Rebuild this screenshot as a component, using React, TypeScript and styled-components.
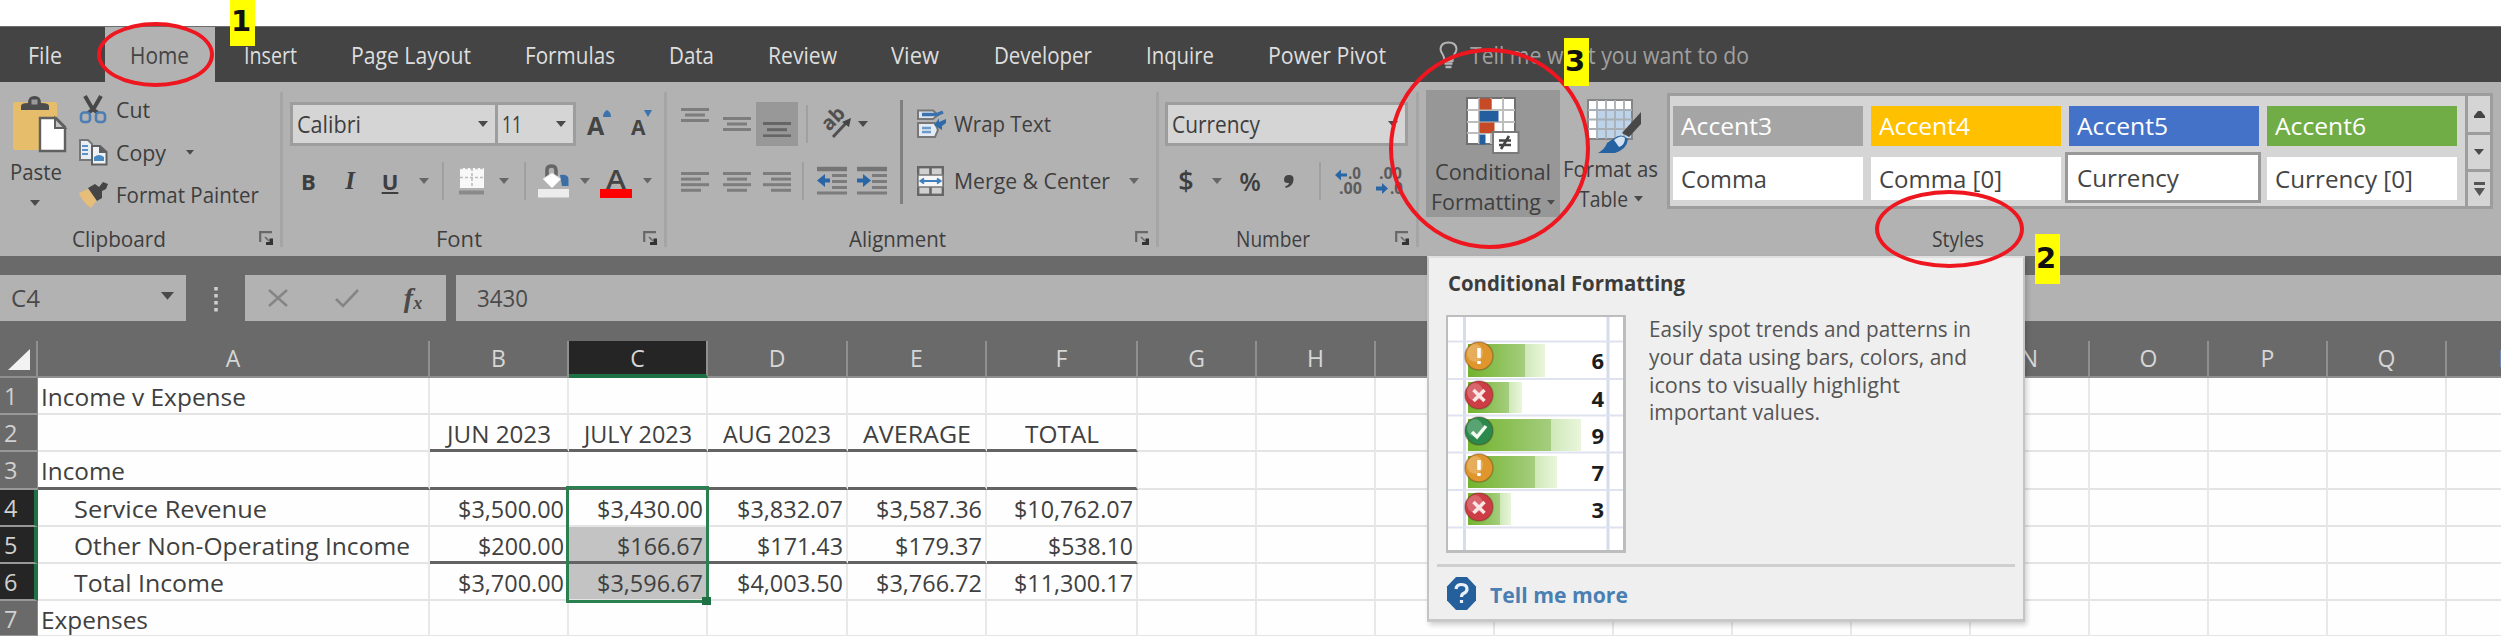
import React, { useLayoutEffect, useRef, useState } from "react";
import styled, { createGlobalStyle } from "styled-components";

const GlobalStyle = createGlobalStyle`
  * { box-sizing: border-box; }
  body { margin: 0; background: #fff; overflow: hidden; font-family: "Open Sans", "Noto Sans", sans-serif; }
`;

/* ---------- text stretched to a known advance width ---------- */
const FitBox = styled.span<{ $w: number; $ml: number }>`
  display: block;
  flex: none;
  width: ${(p) => p.$w}px;
  margin-left: ${(p) => p.$ml}px;
  white-space: nowrap;
`;
const FitInner = styled.span`
  display: inline-block;
  transform-origin: 0 50%;
`;
function Fit({ w, ml = 0, children }: { w: number; ml?: number; children: React.ReactNode }) {
  const ref = useRef<HTMLSpanElement>(null);
  const [k, setK] = useState(1);
  useLayoutEffect(() => {
    if (ref.current && ref.current.offsetWidth) setK(w / ref.current.getBoundingClientRect().width);
  }, []);
  return (
    <FitBox $w={w} $ml={ml}>
      <FitInner ref={ref} style={{ transform: `scaleX(${k})` }}>{children}</FitInner>
    </FitBox>
  );
}

/* ---------- shell ---------- */
const Page = styled.div`
  position: relative;
  width: 2509px;
  height: 640px;
  padding-top: 26px;
  overflow: hidden;
  background: #fff;
`;
const Window = styled.div`
  width: 2501px;
  height: 610px;
  overflow: hidden;
  background: #6a6a6a;
`;

/* ---------- tabs ---------- */
const TabBar = styled.nav`
  display: flex;
  height: 56px;
  background: #444;
  border-top: 1px solid #6d6d6d;
  font-size: 24px;
  font-weight: 500;
  line-height: 56px;
  color: #dedede;
`;
const Tab = styled.div<{ $active?: boolean; $pl?: number; $pr?: number }>`
  display: flex;
  flex: none;
  padding: 0 ${(p) => p.$pr ?? 27.5}px 0 ${(p) => p.$pl ?? 27.5}px;
  background: ${(p) => (p.$active ? "#b2b2b2" : "transparent")};
  color: ${(p) => (p.$active ? "#444" : "#dedede")};
`;
const TellMe = styled.div`
  display: flex;
  align-items: center;
  gap: 12px;
  margin-left: 26px;
  color: #a0a0a0;
  font-size: 24px;
`;

/* ---------- ribbon ---------- */
const Ribbon = styled.section`
  display: flex;
  height: 174px;
  padding-top: 10px;
  background: #b2b2b2;
  color: #3e3e3e;
  font-size: 22.5px;
  font-weight: 500;
`;
const Group = styled.div<{ $w: number; $last?: boolean }>`
  display: flex;
  flex: none;
  flex-direction: column;
  width: ${(p) => p.$w}px;
  height: 155px;
  border-right: ${(p) => (p.$last ? "none" : "3px solid #a5a5a5")};
`;
const Body = styled.div`
  display: flex;
  flex: none;
  height: 137px;
`;
const Footer = styled.div`
  display: flex;
  align-items: center;
  justify-content: space-between;
  height: 18px;
  padding-right: 6px;
  font-size: 22px;
  line-height: 18px;
`;
const Rows = styled.div<{ $ml?: number }>`
  display: flex;
  flex-direction: column;
  gap: 16px;
  padding-top: 10px;
  margin-left: ${(p) => p.$ml ?? 0}px;
`;
const ToolRow = styled.div<{ $h: number }>`
  display: flex;
  align-items: center;
  height: ${(p) => p.$h}px;
  line-height: ${(p) => p.$h}px;
`;
const Slot = styled.div<{ $ml?: number; $mt?: number }>`
  display: flex;
  flex: none;
  margin-left: ${(p) => p.$ml ?? 0}px;
  margin-top: ${(p) => p.$mt ?? 0}px;
  svg { display: block; overflow: visible; }
`;
const Rule = styled.div<{ $ml: number; $h?: number; $dark?: boolean }>`
  flex: none;
  width: ${(p) => (p.$dark ? 3 : 2)}px;
  height: ${(p) => p.$h ?? 38}px;
  margin-left: ${(p) => p.$ml}px;
  background: ${(p) => (p.$dark ? "#808080" : "#a0a0a0")};
`;
const Combo = styled.div<{ $w: number; $joined?: boolean }>`
  display: flex;
  flex: none;
  align-items: center;
  justify-content: space-between;
  width: ${(p) => p.$w}px;
  height: 44px;
  padding: 0 7px 0 4px;
  border: 3px solid #9d9d9d;
  border-left-width: ${(p) => (p.$joined ? 0 : 3)}px;
  background: #d5d5d5;
  font-size: 23px;
  line-height: 40px;
`;
const PasteButton = styled.div`
  display: flex;
  flex-direction: column;
  align-items: center;
  width: 72px;
  padding-top: 4px;
  line-height: 38px;
`;
const ClipList = styled.div`
  display: flex;
  flex-direction: column;
  margin-top: -3px;
  margin-left: 7px;
`;
const ClipItem = styled.div`
  display: flex;
  align-items: center;
  height: 42.5px;
  line-height: 42.5px;
`;
const IconCell = styled.div`
  display: flex;
  width: 37px;
  svg { display: block; overflow: visible; }
`;
const Pressed = styled.div`
  display: flex;
  flex: none;
  width: 42px;
  height: 44px;
  margin-left: 5px;
  padding: 20px 0 0 7px;
  background: #989898;
`;
const BigButton = styled.div<{ $w: number; $on?: boolean }>`
  display: flex;
  flex: none;
  flex-direction: column;
  align-items: center;
  width: ${(p) => p.$w}px;
  height: 127px;
  margin-top: -2px;
  padding-top: 7px;
  background: ${(p) => (p.$on ? "#979797" : "transparent")};
  line-height: 30px;
  svg { display: block; overflow: visible; }
`;
const ButtonText = styled.div<{ $mt?: number }>`
  display: flex;
  align-items: center;
  gap: 6px;
  margin-top: ${(p) => p.$mt ?? 0}px;
`;
const Letter = styled.span<{ $ml: number; $w: number; $italic?: boolean; $size?: number; $light?: boolean }>`
  flex: none;
  width: ${(p) => p.$w}px;
  margin-left: ${(p) => p.$ml}px;
  font-family: ${(p) => (p.$italic ? '"Liberation Serif", serif' : '"Open Sans", sans-serif')};
  font-size: ${(p) => p.$size ?? 22}px;
  font-style: ${(p) => (p.$italic ? "italic" : "normal")};
  font-weight: ${(p) => (p.$light ? 600 : 700)};
  text-align: center;
`;

/* ---------- style gallery ---------- */
const Gallery = styled.div`
  display: flex;
  flex: none;
  width: 826px;
  height: 116px;
  margin: 1px 0 0 6px;
  border: 3px solid #9d9d9d;
  background: #d5d5d5;
`;
const Swatches = styled.div`
  display: grid;
  grid-template-columns: 198px 198px 198px 190px;
  grid-template-rows: 51px 53px;
  flex: none;
  width: 795px;
  padding: 5px 0 0 3px;
`;
const Swatch = styled.div<{ $bg: string; $sel?: boolean; $text?: boolean }>`
  display: flex;
  align-items: center;
  width: ${(p) => (p.$sel ? 196 : 190)}px;
  height: ${(p) => (p.$text ? (p.$sel ? 51 : 43) : 40)}px;
  margin: ${(p) => (p.$text ? (p.$sel ? "0 0 0 -4px" : "5px 0 0") : "5px 0 0")};
  padding-left: ${(p) => (p.$sel ? 9 : 8)}px;
  border: ${(p) => (p.$sel ? "3px solid #999" : "none")};
  background: ${(p) => p.$bg};
  color: ${(p) => (p.$text ? "#444" : "#fff")};
  font-size: 24px;
  line-height: 38px;
`;
const Scroller = styled.div`
  display: flex;
  flex: 1;
  flex-direction: column;
  border-left: 3px solid #9d9d9d;
`;
const ScrollBtn = styled.div<{ $h: number; $last?: boolean }>`
  display: flex;
  align-items: center;
  justify-content: center;
  height: ${(p) => p.$h}px;
  border-bottom: ${(p) => (p.$last ? "none" : "3px solid #9d9d9d")};
`;

/* ---------- formula bar ---------- */
const FormulaBar = styled.section`
  display: flex;
  height: 85px;
  padding-top: 19px;
  color: #4a4a4a;
  font-size: 23px;
  line-height: 48px;
`;
const Field = styled.div<{ $w: number; $ml?: number; $pl?: number }>`
  display: flex;
  flex: none;
  align-items: center;
  width: ${(p) => p.$w}px;
  height: 46px;
  margin-left: ${(p) => p.$ml ?? 0}px;
  padding-left: ${(p) => p.$pl ?? 0}px;
  background: #b2b2b2;
`;
const Sub = styled.sub`
  font-size: 18px;
  line-height: 0;
  vertical-align: -2px;
`;

/* ---------- sheet ---------- */
const Sheet = styled.div`
  position: relative;
  display: grid;
  grid-template-columns: 38px 392px 139px 139px 140px 139px 151px repeat(12, 119px);
  grid-template-rows: 37px 37px 37px 38px 37px 37px 37px 36px;
  width: 2566px;
  background: #fefefe;
`;
const ColHead = styled.div<{ $on?: boolean }>`
  border-right: 2px solid #909090;
  border-bottom: ${(p) => (p.$on ? "4px solid #1e7145" : "2px solid #8f8f8f")};
  background: ${(p) => (p.$on ? "#252525" : "#6a6a6a")};
  color: #d6d6d6;
  font-size: 23px;
  font-weight: 500;
  line-height: 35px;
  text-align: center;
`;
const RowHead = styled.div<{ $on?: boolean }>`
  padding-left: 4px;
  border-right: ${(p) => (p.$on ? "4px solid #1e7145" : "1px solid #8a8a8a")};
  border-bottom: 2px solid #989898;
  background: ${(p) => (p.$on ? "#252525" : "#6a6a6a")};
  color: #d0d0d0;
  font-size: 23.5px;
  line-height: 37px;
`;
const Cell = styled.div<{ $rule?: boolean; $fill?: boolean; $align: string; $pad: number }>`
  display: flex;
  justify-content: ${(p) => p.$align};
  padding: 0 ${(p) => (p.$align === "flex-end" ? p.$pad : 0)}px 0 ${(p) => (p.$align === "flex-start" ? p.$pad : 0)}px;
  border-right: 2px solid ${(p) => (p.$fill ? "#c3c3c3" : "#e8e8e8")};
  border-bottom: ${(p) => (p.$rule ? "3px solid #636363" : "2px solid #e4e4e4")};
  background: ${(p) => (p.$fill ? "#c3c3c3" : "transparent")};
  color: #404040;
  font-size: 23.5px;
  font-weight: 500;
  line-height: 38px;
`;
const Selection = styled.div`
  position: absolute;
  left: 566px;
  top: 145px;
  width: 143px;
  height: 117px;
  border: 3px solid #2b8050;
`;
const FillHandle = styled.div`
  position: absolute;
  right: -5px;
  bottom: -5px;
  width: 9px;
  height: 8px;
  background: #1e7145;
`;

/* ---------- tooltip and annotations ---------- */
const Tip = styled.aside`
  position: absolute;
  left: 1427px;
  top: 256px;
  width: 598px;
  height: 366px;
  padding: 13px 8px 0;
  border: 2px solid #c4c4c4;
  border-top-color: #e0e0e0;
  border-bottom: 3px solid #c8c8c8;
  background: #efefef;
  box-shadow: 2px 3px 5px rgba(0, 0, 0, 0.18);
`;
const TipTitle = styled.div`
  padding-left: 11px;
  color: #3c3c3c;
  font-size: 22px;
  font-weight: 700;
  line-height: 22px;
`;
const TipMain = styled.div`
  display: flex;
  margin-top: 22px;
  padding-left: 9px;
`;
const Thumb = styled.div`
  flex: none;
  width: 180px;
  height: 238px;
  border: 2px solid #bdbdbd;
  border-right-width: 3px;
  border-bottom-width: 3px;
  background: #fff;
  svg { display: block; }
`;
const TipText = styled.div`
  margin-left: 23px;
  color: #555;
  font-size: 22.5px;
  font-weight: 500;
  line-height: 27.8px;
`;
const TipFoot = styled.div`
  display: flex;
  align-items: center;
  height: 52px;
  margin-top: 11px;
  padding: 4px 0 0 9px;
  border-top: 3px solid #cfcfcf;
  color: #4a7fb3;
  font-size: 22px;
  font-weight: 700;
  line-height: 28px;
`;
const Ring = styled.div<{ $x: number; $y: number; $w: number; $h: number }>`
  position: absolute;
  left: ${(p) => p.$x}px;
  top: ${(p) => p.$y}px;
  width: ${(p) => p.$w}px;
  height: ${(p) => p.$h}px;
  border: 4px solid #ee161f;
  border-radius: 50%;
`;
const Tag = styled.div<{ $x: number; $y: number; $h: number; $pt: number }>`
  position: absolute;
  left: ${(p) => p.$x}px;
  top: ${(p) => p.$y}px;
  width: 25px;
  height: ${(p) => p.$h}px;
  padding: ${(p) => p.$pt}px 0 0 1px;
  background: #ff0;
  color: #111;
  font-family: "DejaVu Sans", sans-serif;
  font-size: 29px;
  font-weight: 700;
  line-height: 30px;
`;

/* ---------- icons ---------- */
const Caret = ({ color = "#4a4a4a", w = 10 }: { color?: string; w?: number }) => (
  <svg width={w} height={w * 0.6} viewBox="0 0 10 6"><path d="M0 0H10L5 6Z" fill={color} /></svg>
);
const Launcher = () => (
  <svg width="15" height="15" viewBox="0 0 15 15">
    <path d="M1.2 11V1.2H13" fill="none" stroke="#686868" strokeWidth="2.2" />
    <path d="M6 6L10 10" stroke="#686868" strokeWidth="1.6" />
    <path d="M14 7.5V14H7V11H10.5V7.5Z" fill="#333" />
  </svg>
);
const PasteIcon = () => (
  <svg width="54" height="57" viewBox="0 0 54 57">
    <rect x="0" y="6" width="44" height="48" rx="2" fill="#e6bd6b" />
    <path d="M8 14V10Q8 7 15 7Q15 0 21.500 0Q28 0 28 7Q36 7 36 10V14Z" fill="#4c4c4c" />
    <rect x="18.500" y="3.500" width="6" height="5" fill="#9a9a9a" />
    <path d="M27 22H43L52 31V55H27Z" fill="#fff" stroke="#606060" strokeWidth="2.4" />
    <path d="M42 22V32H52Z" fill="#c4c4c4" stroke="#606060" strokeWidth="2" />
  </svg>
);
const CutIcon = () => (
  <svg width="28" height="28" viewBox="0 0 28 28">
    <path d="M6 0L13.500 13L19 17M22 0L14.500 13L9 17" fill="none" stroke="#484848" strokeWidth="4" />
    <rect x="2" y="16.500" width="9" height="9.500" rx="3" fill="none" stroke="#4c7eb4" strokeWidth="2.600" />
    <rect x="17" y="16.500" width="9" height="9.500" rx="3" fill="none" stroke="#4c7eb4" strokeWidth="2.600" />
  </svg>
);
const CopyIcon = () => (
  <svg width="29" height="27" viewBox="0 0 29 27">
    <path d="M1 1H9L13 5V21H1Z" fill="#e8eef4" stroke="#777" strokeWidth="2" />
    <path d="M3 7H9M3 11H9M3 15H9" stroke="#5b93c8" strokeWidth="2" />
    <path d="M13 7H21L27.500 13V25.500H13Z" fill="#eef2f6" stroke="#606060" strokeWidth="2" />
    <path d="M20 6V14H28Z" fill="#606060" />
    <path d="M15 18Q20 14 25 18V22H15Z" fill="#4a8ac4" />
  </svg>
);
const PainterIcon = () => (
  <svg width="29" height="26" viewBox="0 0 29 26">
    <path d="M0 11L9 7L18 18L12 26Q3 20 0 11Z" fill="#e6bd79" />
    <path d="M9 6L16 2L20 5L24 0L29 2L27 7L23 9V16L18 19Z" fill="#454545" />
  </svg>
);
const GrowA = ({ small }: { small?: boolean }) => (
  <svg width={small ? 22 : 26} height="26" viewBox={small ? "0 0 22 26" : "0 0 26 26"}>
    <text x="0" y="25" fontFamily="Open Sans, sans-serif" fontWeight="700" fontSize={small ? 21 : 25} fill="#444">A</text>
    <path d={small ? "M13 0H21L17 7Z" : "M16 7Q16 2 20 0Q24 2 24 7Z"} fill="#3d73ad" />
  </svg>
);
const BordersIcon = () => (
  <svg width="26" height="28" viewBox="0 0 26 28">
    <rect x="1" y="1" width="24" height="20" fill="#f8f8f8" />
    <path d="M1 10.500H25M13 1V21M1 1.500H25" stroke="#bcbcbc" strokeWidth="1.600" strokeDasharray="3 2" />
    <rect x="0" y="23.500" width="25" height="4" fill="#8a8a8a" />
  </svg>
);
const BucketIcon = () => (
  <svg width="32" height="33" viewBox="0 0 32 33">
    <path d="M9 12V5Q9 1 14 1Q18 1 18 6V13" fill="none" stroke="#666" strokeWidth="3.600" />
    <path d="M5 14L14 8L23 14L14 23Z" fill="#fff" stroke="#ddd" />
    <path d="M22 10Q31 9 30.500 15V21H24Z" fill="#3b6ea5" />
    <rect x="0" y="24" width="31" height="8.500" fill="#ececec" />
  </svg>
);
const FontColorIcon = () => (
  <svg width="32" height="29" viewBox="0 0 32 29">
    <text x="6" y="20" fontFamily="Open Sans, sans-serif" fontWeight="600" fontSize="27" textLength="20" lengthAdjust="spacingAndGlyphs" fill="#444">A</text>
    <rect x="0" y="20" width="32" height="9" fill="#fe0000" />
  </svg>
);
const Lines = ({ rows, color = "#7d7d7d", step = 6.2 }: { rows: [number, number][]; color?: string; step?: number }) => (
  <svg width="28" height={step * (rows.length - 1) + 3} viewBox={`0 0 28 ${step * (rows.length - 1) + 3}`}>
    {rows.map(([x, w], i) => <rect key={i} x={x} y={i * step} width={w} height="3" fill={color} />)}
  </svg>
);
const OrientIcon = () => (
  <svg width="32" height="30" viewBox="0 0 32 30">
    <text x="0" y="0" transform="translate(8 23) rotate(-45)" fontFamily="Open Sans, sans-serif" fontWeight="700" fontSize="20" fill="#505050">ab</text>
    <path d="M12 28L26 13" stroke="#505050" strokeWidth="3" />
    <path d="M21 13L30 9L28 18Z" fill="#444" />
  </svg>
);
const IndentIcon = ({ right }: { right?: boolean }) => (
  <svg width="30" height="28" viewBox="0 0 30 28">
    <path d="M0 2H30" stroke="#757575" strokeWidth="4.500" />
    <path d="M15 8.500H30M15 14.500H30M15 20.500H30M0 26H30" stroke="#7b7b7b" strokeWidth="3" />
    {right
      ? <path d="M0 11.500H6V7L14 13.500L6 20V15.500H0Z" fill="#2a66a5" />
      : <path d="M13 11.500H8V7L0 13.500L8 20V15.500H13Z" fill="#2a66a5" />}
  </svg>
);
const WrapIcon = () => (
  <svg width="30" height="30" viewBox="0 0 30 30">
    <path d="M1 10V1.500H16L21 6L16 10Z" fill="#dbe5ef" stroke="#777" strokeWidth="2" />
    <path d="M5 5.500H20L26 3" stroke="#3a72ad" strokeWidth="3.500" fill="none" />
    <path d="M1 14H18L21 21L18 28H1Z" fill="#e4ebf3" stroke="#777" strokeWidth="2" />
    <path d="M5 19H14M5 23H14" stroke="#6a9bcb" strokeWidth="2.500" />
    <path d="M17 16L22 9.500V13L29 10V14L25 17V21Z" fill="#2f6aa8" />
  </svg>
);
const MergeIcon = () => (
  <svg width="27" height="30" viewBox="0 0 27 30">
    <rect x="1.200" y="1.200" width="24.600" height="27.600" fill="#d0d0d0" stroke="#666" strokeWidth="2.400" />
    <path d="M13.500 1V9M13.500 21V29" stroke="#666" strokeWidth="2.600" />
    <rect x="1" y="9" width="25" height="12" fill="#f6f6f6" stroke="#777" strokeWidth="1.500" />
    <path d="M4 15H23M7 12.500L3.500 15L7 17.500M20 12.500L23.500 15L20 17.500" fill="none" stroke="#3f7fc0" strokeWidth="2" />
  </svg>
);
const CommaIcon = () => (
  <svg width="11" height="13" viewBox="0 0 11 13"><path d="M1 5Q1 0 6 0Q11 0 10.500 5Q10 11 3 13L2 11.500Q6 10 6 8Q1 8.500 1 5Z" fill="#444" /></svg>
);
const DecimalIcon = ({ dec }: { dec?: boolean }) => (
  <svg width="27" height="28" viewBox="0 0 27 28">
    <g fontFamily="Open Sans, sans-serif" fontWeight="700" fontSize="16" fill="#5c5c5c">
      <text x={dec ? 3 : 13} y="12" textLength={dec ? 23 : 13} lengthAdjust="spacingAndGlyphs">{dec ? ".00" : ".0"}</text>
      <text x={dec ? 14 : 4} y="27" textLength={dec ? 13 : 23} lengthAdjust="spacingAndGlyphs">{dec ? ".0" : ".00"}</text>
    </g>
    {dec
      ? <path d="M0 19.500H6V16L12 21.500L6 27V23.500H0Z" fill="#2a66a5" />
      : <path d="M12 6.500H6V2.500L0 8L6 13.500V9.500H12Z" fill="#2a66a5" />}
  </svg>
);
const CondIcon = () => (
  <svg width="54" height="57" viewBox="0 0 54 57">
    <rect x="1" y="1" width="48" height="46" fill="#fff" stroke="#707070" strokeWidth="2" />
    <path d="M13 1V47M25 1V47M37 1V47M1 13H49M1 25H49M1 36H49" stroke="#bdbdbd" strokeWidth="2" />
    <rect x="13.500" y="1.500" width="12" height="11" fill="#c74a26" />
    <rect x="13.500" y="14" width="19" height="10.500" fill="#235e9e" />
    <rect x="13.500" y="25.500" width="15" height="10.500" fill="#c74a26" />
    <rect x="13.500" y="37.500" width="6" height="10" fill="#235e9e" />
    <rect x="27" y="35" width="25.500" height="21" fill="#fff" stroke="#7a7a7a" strokeWidth="2" />
    <path d="M33 43.500H45M33 48H45M43 39L35 52" stroke="#444" strokeWidth="2.600" />
  </svg>
);
const FormatTableIcon = () => (
  <svg width="54" height="55" viewBox="0 0 54 55">
    <rect x="1" y="1" width="44" height="39" fill="#fff" stroke="#858585" strokeWidth="2" />
    <rect x="10" y="11" width="34" height="28" fill="#bcd3ea" />
    <path d="M10 1V40M19 1V40M28 1V40M37 1V40M1 11H45M1 20.500H45M1 30H45" stroke="#a9afb6" strokeWidth="1.800" />
    <path d="M54 13V25L42 38L35 34Z" fill="#484848" />
    <path d="M26 40Q34 33 41 40Q40 50 28 54H11Q18 50 20 44Z" fill="#2562a2" />
    <path d="M27 41Q34 35 38 39Q38 46 32 48Z" fill="#d4e3f2" />
  </svg>
);
const BulbIcon = () => (
  <svg width="19" height="28" viewBox="0 0 19 28">
    <path d="M5.500 20Q5.500 16 3.500 13Q1.500 10 1.500 8Q2 1.500 9.500 1.500Q17 1.500 17.500 8Q17.500 10 15.500 13Q13.500 16 13.500 20Z" fill="none" stroke="#b4b4b4" strokeWidth="2" />
    <path d="M5.500 22.500H13.500M6.500 26H12.500" stroke="#b4b4b4" strokeWidth="2.500" />
  </svg>
);
const HelpIcon = () => (
  <svg width="31" height="33" viewBox="0 0 31 33">
    <path d="M10 0H21L30 9.500V23.500L21 33H10L1 23.500V9.500Z" fill="#25609c" />
    <path d="M10 12Q10.500 7.500 15.500 7.500Q21 7.500 21 12Q21 15 17.500 16.500Q15.500 17.500 15.500 20M15.500 23V26" fill="none" stroke="#e9f0f7" strokeWidth="3.200" />
  </svg>
);

const BARS = [
  { y: 27, h: 33, a: 57, b: 77, n: "6", kind: "warn", cy: 39 },
  { y: 65, h: 31, a: 41, b: 54, n: "4", kind: "bad", cy: 78 },
  { y: 102, h: 32, a: 83, b: 113, n: "9", kind: "good", cy: 114 },
  { y: 139, h: 32, a: 67, b: 89, n: "7", kind: "warn", cy: 151 },
  { y: 176, h: 32, a: 32, b: 43, n: "3", kind: "bad", cy: 190 },
];
const KIND: Record<string, string> = { warn: "#df962c", bad: "#cd3d45", good: "#2b8a4b" };
const Preview = () => (
  <svg width="175" height="233" viewBox="0 0 175 233">
    <defs>
      <linearGradient id="barDark"><stop offset="0" stopColor="#72b32c" /><stop offset="1" stopColor="#a5cd7f" /></linearGradient>
      <linearGradient id="barLight"><stop offset="0" stopColor="#cfe8b8" /><stop offset="1" stopColor="#e9f6dc" /></linearGradient>
    </defs>
    <path d="M16.500 0V233M160 0V233" stroke="#d7dcec" strokeWidth="3" />
    <path d="M0 24.500H175M0 62H175M0 98.500H175M0 135.500H175M0 173H175M0 210.500H175" stroke="#dfe3f0" strokeWidth="2" />
    {BARS.map((r) => (
      <g key={r.y}>
        <rect x="20" y={r.y} width={r.a} height={r.h} fill="url(#barDark)" />
        <rect x={20 + r.a} y={r.y} width={r.b - r.a} height={r.h} fill="url(#barLight)" />
        <ellipse cx="31" cy={r.cy} rx="14" ry="14" fill={KIND[r.kind]} stroke="rgba(90,50,30,.35)" strokeWidth="1.500" />
        <ellipse cx="27" cy={r.cy - 3} rx="8" ry="9" fill="rgba(255,255,255,.22)" />
        {r.kind === "warn" && <path d={`M31 ${r.cy - 8}V${r.cy + 2}M31 ${r.cy + 5}V${r.cy + 8}`} stroke="#fff" strokeWidth="3.500" />}
        {r.kind === "bad" && <path d={`M25.500 ${r.cy - 5}L36.500 ${r.cy + 6}M36.500 ${r.cy - 5}L25.500 ${r.cy + 6}`} stroke="#fbe6e6" strokeWidth="3.500" />}
        {r.kind === "good" && <path d={`M24 ${r.cy + 1}L29 ${r.cy + 6}L38 ${r.cy - 5}`} fill="none" stroke="#f2faf2" strokeWidth="3.500" />}
        <text x="156" y={r.y + 25} textAnchor="end" fontFamily="Open Sans, sans-serif" fontWeight="700" fontSize="22" fill="#1c1c1c">{r.n}</text>
      </g>
    ))}
  </svg>
);

/* ---------- data ---------- */
const TABS: [string, number][] = [
  ["Insert", 53], ["Page Layout", 120], ["Formulas", 90], ["Data", 45], ["Review", 69],
  ["View", 48], ["Developer", 98], ["Inquire", 68], ["Power Pivot", 118],
];
const COLS = "ABCDEFGHIJKLMNOPQR".split("");
/* the tooltip lies over these columns' headings */
const COVERED = "IJKLM";
type Item = { t: string; w: number; a?: "l" | "c" | "r"; pad?: number };
const GRID: Item[][] = [
  [{ t: "Income v Expense", w: 205, pad: 3 }],
  [{ t: "", w: 0 }, { t: "JUN 2023", w: 104, a: "c" }, { t: "JULY 2023", w: 108, a: "c" }, { t: "AUG 2023", w: 108, a: "c" }, { t: "AVERAGE", w: 108, a: "c" }, { t: "TOTAL", w: 74, a: "c" }],
  [{ t: "Income", w: 84, pad: 3 }],
  [{ t: "Service Revenue", w: 193, pad: 36 }, { t: "$3,500.00", w: 106, a: "r" }, { t: "$3,430.00", w: 106, a: "r" }, { t: "$3,832.07", w: 106, a: "r" }, { t: "$3,587.36", w: 106, a: "r" }, { t: "$10,762.07", w: 119, a: "r" }],
  [{ t: "Other Non-Operating Income", w: 336, pad: 36 }, { t: "$200.00", w: 86, a: "r" }, { t: "$166.67", w: 86, a: "r" }, { t: "$171.43", w: 86, a: "r" }, { t: "$179.37", w: 87, a: "r" }, { t: "$538.10", w: 85, a: "r" }],
  [{ t: "Total Income", w: 150, pad: 36 }, { t: "$3,700.00", w: 106, a: "r" }, { t: "$3,596.67", w: 106, a: "r" }, { t: "$4,003.50", w: 106, a: "r" }, { t: "$3,766.72", w: 106, a: "r" }, { t: "$11,300.17", w: 119, a: "r" }],
  [{ t: "Expenses", w: 107, pad: 3 }],
];
const hasRule = (r: number, c: number) => c < 6 && (r === 2 || ((r === 1 || r === 4) && c > 0));
const ALIGN = { l: "flex-start", c: "center", r: "flex-end" };

export default function App() {
  return (
    <Page>
      <GlobalStyle />
      <Window>
        <TabBar>
          <Tab $pl={28} $pr={43}><Fit w={34}>File</Fit></Tab>
          <Tab $active $pl={25} $pr={26}><Fit w={59}>Home</Fit></Tab>
          {TABS.map(([t, w]) => <Tab key={t} $pl={t === "Insert" ? 28.5 : 27.1} $pr={27.1}><Fit w={w}>{t}</Fit></Tab>)}
          <TellMe><BulbIcon /><Fit w={279}>Tell me what you want to do</Fit></TellMe>
        </TabBar>

        <Ribbon>
          <Group $w={283}>
            <Body>
              <PasteButton>
                <Slot $ml={7}><PasteIcon /></Slot>
                <Fit w={52}>Paste</Fit>
                <Slot $mt={9} $ml={-3}><Caret /></Slot>
              </PasteButton>
              <ClipList>
                <ClipItem><IconCell><CutIcon /></IconCell><Fit w={34}>Cut</Fit></ClipItem>
                <ClipItem><IconCell><CopyIcon /></IconCell><Fit w={50}>Copy</Fit><Slot $ml={20}><Caret w={8} /></Slot></ClipItem>
                <ClipItem><IconCell><PainterIcon /></IconCell><Fit w={143}>Format Painter</Fit></ClipItem>
              </ClipList>
            </Body>
            <Footer><Fit ml={72} w={94}>Clipboard</Fit><Launcher /></Footer>
          </Group>

          <Group $w={384}>
            <Body>
              <Rows $ml={7}>
                <ToolRow $h={44}>
                  <Combo $w={208}><Fit w={64}>Calibri</Fit><Caret /></Combo>
                  <Combo $w={78} $joined><Fit w={20}>11</Fit><Caret /></Combo>
                  <Slot $ml={11} $mt={-2}><GrowA /></Slot>
                  <Slot $ml={18} $mt={-2}><GrowA small /></Slot>
                </ToolRow>
                <ToolRow $h={38}>
                  <Letter $ml={10} $w={17}>B</Letter>
                  <Letter $ml={25} $w={16} $italic $size={25}>I</Letter>
                  <Letter $ml={22} $w={20}><u>U</u></Letter>
                  <Slot $ml={19}><Caret color="#666" /></Slot>
                  <Rule $ml={13} />
                  <Slot $ml={15}><BordersIcon /></Slot>
                  <Slot $ml={14}><Caret color="#666" /></Slot>
                  <Rule $ml={15} />
                  <Slot $ml={12}><BucketIcon /></Slot>
                  <Slot $ml={10}><Caret color="#666" /></Slot>
                  <Slot $ml={10} $mt={5}><FontColorIcon /></Slot>
                  <Slot $ml={11}><Caret color="#666" w={9} /></Slot>
                </ToolRow>
              </Rows>
            </Body>
            <Footer><Fit ml={153} w={46}>Font</Fit><Launcher /></Footer>
          </Group>

          <Group $w={492}>
            <Body>
              <Rows $ml={14}>
                <ToolRow $h={44}>
                  <Slot $mt={-18}><Lines step={5.5} rows={[[0, 28], [4, 20], [0, 28]]} /></Slot>
                  <Slot $ml={14} $mt={-1}><Lines step={5.5} rows={[[0, 28], [4, 20], [0, 28]]} /></Slot>
                  <Pressed><Lines color="#666" rows={[[0, 28], [4, 20], [0, 28]]} /></Pressed>
                  <Rule $ml={8} />
                  <Slot $ml={13}><OrientIcon /></Slot>
                  <Slot $ml={5}><Caret /></Slot>
                </ToolRow>
                <ToolRow $h={38}>
                  <Slot $mt={2}><Lines step={5.6} rows={[[0, 28], [0, 20], [0, 28], [0, 20]]} /></Slot>
                  <Slot $ml={14} $mt={2}><Lines step={5.6} rows={[[0, 28], [4, 20], [0, 28], [4, 20]]} /></Slot>
                  <Slot $ml={12} $mt={2}><Lines step={5.6} rows={[[0, 28], [8, 20], [0, 28], [8, 20]]} /></Slot>
                  <Rule $ml={11} />
                  <Slot $ml={13}><IndentIcon /></Slot>
                  <Slot $ml={10}><IndentIcon right /></Slot>
                </ToolRow>
              </Rows>
              <Slot $ml={13} $mt={8}><Rule $ml={0} $h={104} $dark /></Slot>
              <Rows $ml={14}>
                <ToolRow $h={44}><WrapIcon /><Fit ml={7} w={97}>Wrap Text</Fit></ToolRow>
                <ToolRow $h={38}><MergeIcon /><Fit ml={10} w={156}>Merge &amp; Center</Fit><Slot $ml={19}><Caret color="#666" /></Slot></ToolRow>
              </Rows>
            </Body>
            <Footer><Fit ml={182} w={97}>Alignment</Fit><Launcher /></Footer>
          </Group>

          <Group $w={260}>
            <Body>
              <Rows $ml={6}>
                <ToolRow $h={44}><Combo $w={243}><Fit w={88}>Currency</Fit><Caret /></Combo></ToolRow>
                <ToolRow $h={38}>
                  <Letter $ml={12} $w={18} $size={27} $light>$</Letter>
                  <Slot $ml={17}><Caret color="#666" /></Slot>
                  <Letter $ml={14} $w={28} $size={25} $light>%</Letter>
                  <Slot $ml={19}><CommaIcon /></Slot>
                  <Rule $ml={25} />
                  <Slot $ml={14}><DecimalIcon /></Slot>
                  <Slot $ml={14}><DecimalIcon dec /></Slot>
                </ToolRow>
              </Rows>
            </Body>
            <Footer><Fit ml={77} w={74}>Number</Fit><Launcher /></Footer>
          </Group>

          <Group $w={1082} $last>
            <Body>
              <Slot $ml={7} />
              <BigButton $w={134} $on>
                <CondIcon />
                <ButtonText $mt={3}><Fit w={116}>Conditional</Fit></ButtonText>
                <ButtonText><Fit w={110}>Formatting</Fit><Caret w={8} /></ButtonText>
              </BigButton>
              <BigButton $w={101}>
                <Slot $mt={2} $ml={6}><FormatTableIcon /></Slot>
                <ButtonText><Fit w={95}>Format as</Fit></ButtonText>
                <ButtonText><Fit w={49}>Table</Fit><Caret w={9} /></ButtonText>
              </BigButton>
              <Gallery>
                <Swatches>
                  <Swatch $bg="#a5a5a5"><Fit w={91}>Accent3</Fit></Swatch>
                  <Swatch $bg="#ffc000"><Fit w={91}>Accent4</Fit></Swatch>
                  <Swatch $bg="#4472c8"><Fit w={91}>Accent5</Fit></Swatch>
                  <Swatch $bg="#70ad47"><Fit w={91}>Accent6</Fit></Swatch>
                  <Swatch $text $bg="#fff"><Fit w={86}>Comma</Fit></Swatch>
                  <Swatch $text $bg="#fff"><Fit w={123}>Comma [0]</Fit></Swatch>
                  <Swatch $text $sel $bg="#fff"><Fit w={102}>Currency</Fit></Swatch>
                  <Swatch $text $bg="#fff"><Fit w={138}>Currency [0]</Fit></Swatch>
                </Swatches>
                <Scroller>
                  <ScrollBtn $h={39}><svg width="11" height="7" viewBox="0 0 11 7"><path d="M0 7V5L4 0H7L11 5V7Z" fill="#444" /></svg></ScrollBtn>
                  <ScrollBtn $h={37}><Caret /></ScrollBtn>
                  <ScrollBtn $h={34} $last><svg width="11" height="14" viewBox="0 0 11 14"><path d="M0 1.500H11" stroke="#555" strokeWidth="3" /><path d="M0 6H11L5.500 14Z" fill="#555" /></svg></ScrollBtn>
                </Scroller>
              </Gallery>
            </Body>
            <Footer><Fit ml={513} w={52}>Styles</Fit></Footer>
          </Group>
        </Ribbon>

        <FormulaBar>
          <Field $w={186} $pl={11}><Fit w={29}>C4</Fit><Slot $ml={121} $mt={-5}><Caret w={13} /></Slot></Field>
          <Slot $ml={28} $mt={11}>
            <svg width="4" height="26" viewBox="0 0 4 26"><path d="M2 1V26" stroke="#cfcfcf" strokeWidth="3.500" strokeDasharray="3.500 3.500" /></svg>
          </Slot>
          <Field $ml={27} $w={201} $pl={23}>
            <svg width="20" height="18" viewBox="0 0 20 18"><path d="M1 1L19 17M19 1L1 17" stroke="#858585" strokeWidth="2.400" /></svg>
            <Slot $ml={47}><svg width="24" height="20" viewBox="0 0 24 20"><path d="M1 11L8 18L23 2" fill="none" stroke="#858585" strokeWidth="2.600" /></svg></Slot>
            <Letter $ml={42} $w={24} $italic $size={28}>f<Sub>x</Sub></Letter>
          </Field>
          <Field $ml={10} $w={2045} $pl={21}><Fit w={51}>3430</Fit></Field>
        </FormulaBar>

        <Sheet>
          <ColHead><svg width="22" height="21" viewBox="0 0 22 21" overflow="visible"><path d="M22 0V21H0Z" fill="#f2f2f2" transform="translate(1 3)" /></svg></ColHead>
          {COLS.map((c) => <ColHead key={c} $on={c === "C"}>{COVERED.includes(c) ? null : c}</ColHead>)}
          {GRID.map((row, r) => (
            <React.Fragment key={r}>
              <RowHead $on={r >= 3 && r <= 5}>{r + 1}</RowHead>
              {COLS.map((c, i) => {
                const it = row[i];
                return (
                  <Cell key={c} $rule={hasRule(r, i)} $fill={i === 2 && (r === 4 || r === 5)} $align={ALIGN[it?.a ?? "l"]} $pad={it?.pad ?? 3}>
                    {it && it.t && <Fit w={it.w}>{it.t}</Fit>}
                  </Cell>
                );
              })}
            </React.Fragment>
          ))}
          <Selection><FillHandle /></Selection>
        </Sheet>
      </Window>

      <Tip>
        <TipTitle><Fit w={237}>Conditional Formatting</Fit></TipTitle>
        <TipMain>
          <Thumb><Preview /></Thumb>
          <TipText>
            <Fit w={322}>Easily spot trends and patterns in</Fit>
            <Fit w={318}>your data using bars, colors, and</Fit>
            <Fit w={251}>icons to visually highlight</Fit>
            <Fit w={171}>important values.</Fit>
          </TipText>
        </TipMain>
        <TipFoot><HelpIcon /><Fit ml={13} w={138}>Tell me more</Fit></TipFoot>
      </Tip>

      <Ring $x={97} $y={22} $w={117} $h={65} />
      <Ring $x={1389} $y={48} $w={201} $h={201} />
      <Ring $x={1875} $y={190} $w={149} $h={78} />
      <Tag $x={230} $y={0} $h={46} $pt={6}>1</Tag>
      <Tag $x={2035} $y={234} $h={50} $pt={9}>2</Tag>
      <Tag $x={1564} $y={38} $h={48} $pt={8}>3</Tag>
    </Page>
  );
}
